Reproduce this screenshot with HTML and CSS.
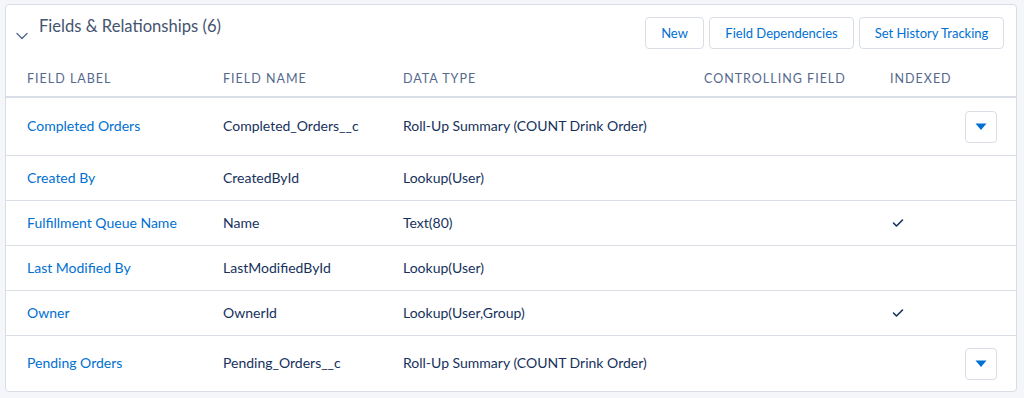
FILE: index.html
```html
<!DOCTYPE html>
<html>
<head>
<meta charset="utf-8">
<link rel="stylesheet" href="styles.css">
</head>
<body>
<div class="card">
  <div class="card-header">
    <div class="title-wrap">
      <svg class="chevron" width="12" height="8" viewBox="0 0 12 8"><path d="M1 1.5 L6 6.5 L11 1.5" fill="none" stroke="#54698d" stroke-width="1.4" stroke-linecap="round" stroke-linejoin="round"/></svg>
      <h2 class="title">Fields &amp; Relationships (6)</h2>
    </div>
    <div class="actions">
      <button class="btn btn-new">New</button>
      <button class="btn btn-wide">Field Dependencies</button>
      <button class="btn btn-wide">Set History Tracking</button>
    </div>
  </div>
  <div class="table">
    <div class="row head">
      <div>FIELD LABEL</div>
      <div>FIELD NAME</div>
      <div>DATA TYPE</div>
      <div>CONTROLLING FIELD</div>
      <div>INDEXED</div>
    </div>
    <div class="row tall">
      <div class="link">Completed Orders</div>
      <div>Completed_Orders__c</div>
      <div>Roll-Up Summary (COUNT Drink Order)</div>
      <div></div>
      <div class="last"><button class="menu"><svg width="12" height="8" viewBox="0 0 12 8"><path d="M0.5 0.5 H11.5 L6 7 Z" fill="#0070d2"/></svg></button></div>
    </div>
    <div class="row">
      <div class="link">Created By</div>
      <div>CreatedById</div>
      <div>Lookup(User)</div>
      <div></div>
      <div></div>
    </div>
    <div class="row">
      <div class="link">Fulfillment Queue Name</div>
      <div>Name</div>
      <div>Text(80)</div>
      <div></div>
      <div><svg class="check" width="12" height="10" viewBox="0 0 12 10"><path d="M1.5 5 L4.5 8 L10.5 2" fill="none" stroke="#16325c" stroke-width="1.6" stroke-linecap="round" stroke-linejoin="round"/></svg></div>
    </div>
    <div class="row">
      <div class="link">Last Modified By</div>
      <div>LastModifiedById</div>
      <div>Lookup(User)</div>
      <div></div>
      <div></div>
    </div>
    <div class="row">
      <div class="link">Owner</div>
      <div>OwnerId</div>
      <div>Lookup(User,Group)</div>
      <div></div>
      <div><svg class="check" width="12" height="10" viewBox="0 0 12 10"><path d="M1.5 5 L4.5 8 L10.5 2" fill="none" stroke="#16325c" stroke-width="1.6" stroke-linecap="round" stroke-linejoin="round"/></svg></div>
    </div>
    <div class="row tall lastrow">
      <div class="link">Pending Orders</div>
      <div>Pending_Orders__c</div>
      <div>Roll-Up Summary (COUNT Drink Order)</div>
      <div></div>
      <div class="last"><button class="menu"><svg width="12" height="8" viewBox="0 0 12 8"><path d="M0.5 0.5 H11.5 L6 7 Z" fill="#0070d2"/></svg></button></div>
    </div>
  </div>
</div>
</body>
</html>
```
FILE: styles.css
```css
* { box-sizing: border-box; }
html, body { margin: 0; padding: 0; }
body {
  background: #f4f6f9;
  font-family: Lato, "Liberation Sans", Arial, sans-serif;
  color: #16325c;
  font-size: 14px;
  height: 398px;
  overflow: hidden;
}
.card {
  margin: 4px 0 0 5px;
  width: 1012px;
  background: #fff;
  border: 1px solid #d8dde6;
  border-radius: 4px;
}
.card-header {
  display: flex;
  justify-content: space-between;
  align-items: flex-start;
  padding: 9px 12px 0 10px;
  height: 61px;
}
.title-wrap {
  display: flex;
  align-items: flex-start;
}
.chevron { margin-top: 18px; margin-right: 11px; }
.title {
  margin: 0;
  font-weight: normal;
  font-size: 16.6px;
  line-height: 24px;
  color: #45546f;
}
.actions {
  display: flex;
  gap: 5px;
  margin-top: 3px;
}
.btn {
  height: 32px;
  padding: 0;
  background: #fff;
  border: 1px solid #d8dde6;
  border-radius: 4px;
  color: #0070d2;
  font-family: inherit;
  font-size: 13px;
}
.btn-new { width: 59px; }
.btn-wide { width: 145px; }
.row {
  display: grid;
  grid-template-columns: 196px 180px 301px 186px 107px;
  padding: 0 0 2px 21px;
  align-items: center;
  height: 45px;
  border-bottom: 1px solid #d8dde6;
}
.row.head {
  height: 32px;
  border-bottom: 2px solid #d8dde6;
  font-size: 12.5px;
  letter-spacing: 1px;
  color: #54698d;
  align-items: start;
  padding-top: 5px;
  padding-bottom: 0;
}
.row.tall { height: 58px; }
.row.lastrow { border-bottom: none; height: 55px; }
.last { display: flex; justify-content: flex-end; margin-bottom: -2px; }
.link { color: #0070d2; }
.menu {
  width: 32px;
  height: 32px;
  background: #fff;
  border: 1px solid #d8dde6;
  border-radius: 4px;
  display: flex;
  align-items: center;
  justify-content: center;
  padding: 0;
}
.check { margin-left: 2px; display: block; margin-top: 1px; }
```
